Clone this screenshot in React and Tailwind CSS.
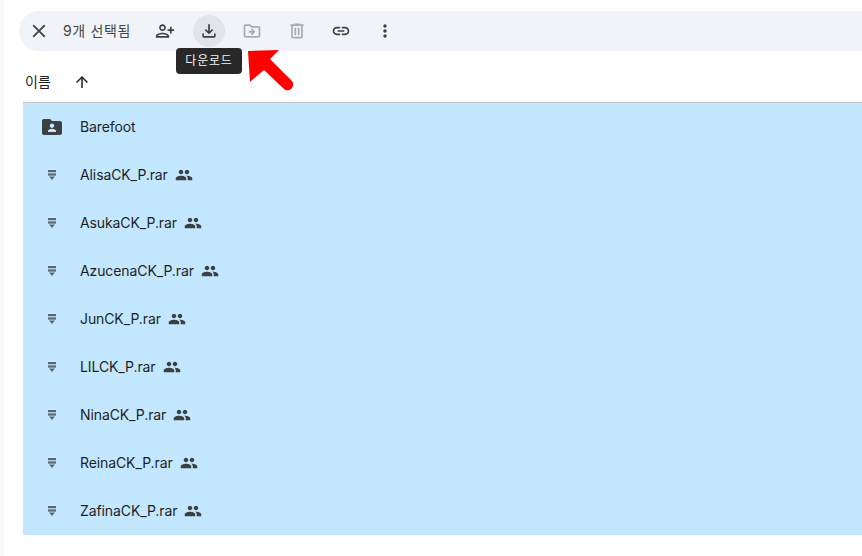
const P = {
  close: "M19 6.41L17.59 5 12 10.59 6.41 5 5 6.41 10.59 12 5 17.59 6.41 19 12 13.41 17.59 19 19 17.59 13.41 12z",
  add: "M15 12c2.21 0 4-1.79 4-4s-1.79-4-4-4-4 1.79-4 4 1.79 4 4 4zm0-6c1.1 0 2 .9 2 2s-.9 2-2 2-2-.9-2-2 .9-2 2-2zm0 8c-2.67 0-8 1.34-8 4v2h16v-2c0-2.66-5.33-4-8-4zm-6 4c.22-.72 3.31-2 6-2 2.7 0 5.8 1.29 6 2H9zm-3-3v-3h3v-2H6V7H4v3H1v2h3v3h2z",
  download: "M18 15v3H6v-3H4v3c0 1.1.9 2 2 2h12c1.1 0 2-.9 2-2v-3h-2zm-1-4l-1.41-1.41L13 12.17V4h-2v8.17L8.41 9.59 7 11l5 5 5-5z",
  move: "M20 6h-8l-2-2H4c-1.11 0-1.99.89-1.99 2L2 18c0 1.11.89 2 2 2h16c1.11 0 2-.89 2-2V8c0-1.11-.89-2-2-2zm0 12H4V6h5.17l2 2H20v10zm-8.01-9l-1.41 1.41L12.16 12H8v2h4.16l-1.59 1.59L11.99 17 16 13.01 11.99 9z",
  trash: "M15 4V3H9v1H4v2h1v13c0 1.1.9 2 2 2h10c1.1 0 2-.9 2-2V6h1V4h-5zm2 15H7V6h10v13zM9 8h2v9H9zm4 0h2v9h-2z",
  link: "M17 7h-4v2h4c1.65 0 3 1.35 3 3s-1.35 3-3 3h-4v2h4c2.76 0 5-2.24 5-5s-2.24-5-5-5zm-6 8H7c-1.65 0-3-1.35-3-3s1.35-3 3-3h4V7H7c-2.76 0-5 2.24-5 5s2.24 5 5 5h4v-2zm-3-4h8v2H8z",
  more: "M12 8c1.1 0 2-.9 2-2s-.9-2-2-2-2 .9-2 2 .9 2 2 2zm0 2c-1.1 0-2 .9-2 2s.9 2 2 2 2-.9 2-2-.9-2-2-2zm0 6c-1.1 0-2 .9-2 2s.9 2 2 2 2-.9 2-2-.9-2-2-2z",
  up: "M4 12l1.41 1.41L11 7.83V20h2V7.83l5.58 5.59L20 12l-8-8-8 8z",
  people: "M16 11c1.66 0 2.99-1.34 2.99-3S17.66 5 16 5c-1.66 0-3 1.34-3 3s1.34 3 3 3zm-8 0c1.66 0 2.99-1.34 2.99-3S9.66 5 8 5C6.34 5 5 6.34 5 8s1.34 3 3 3zm0 2c-2.33 0-7 1.17-7 3.5V19h14v-2.5c0-2.33-4.67-3.5-7-3.5zm8 0c-.29 0-.62.02-.97.05 1.16.84 1.97 1.97 1.97 3.45V19h6v-2.5c0-2.33-4.67-3.5-7-3.5z",
  folder: "M20 6h-8l-2-2H4c-1.1 0-1.99.9-1.99 2L2 18c0 1.1.9 2 2 2h16c1.1 0 2-.9 2-2V8c0-1.1-.9-2-2-2zm-8 2.5c1.2 0 2.2 1 2.2 2.2s-1 2.2-2.2 2.2-2.2-1-2.2-2.2 1-2.2 2.2-2.2zm4 8.5H8v-1.2c0-1.33 2.67-2 4-2s4 .67 4 2V17z",
};

function Icon({ d, size = 20, className = "", flip = false }) {
  return (
    <svg width={size} height={size} viewBox="0 0 24 24" fill="currentColor" className={className} style={flip ? { transform: "scaleX(-1)" } : undefined}>
      <path d={d} />
    </svg>
  );
}

function Tool({ d, disabled, active, flip, className = "" }) {
  return (
    <div className={`w-8 h-8 rounded-full flex items-center justify-center ${active ? "bg-[#e1e4e9]" : ""} ${disabled ? "text-[#a9acaf]" : "text-[#3c4043]"} ${className}`}>
      <Icon d={d} flip={flip} />
    </div>
  );
}

function ArchiveIcon() {
  return (
    <svg width="8" height="10" viewBox="0 0 8 10" fill="#5c6670">
      <rect x="0" y="0" width="8" height="2.2" />
      <rect x="0" y="3.4" width="8" height="2.2" />
      <path d="M1 6.6h6L4 10z" />
    </svg>
  );
}

function Row({ name, folder }) {
  return (
    <div className="h-12 flex items-center text-[#1f1f1f]">
      <div className={folder ? "w-[58px] flex justify-center" : "w-[57px] flex justify-center"}>
        {folder ? <Icon d={P.folder} size={24} className="text-[#3c4043]" /> : <ArchiveIcon />}
      </div>
      <span className={`text-sm tracking-[-0.1px] ${folder ? "-ml-px" : ""}`}>{name}</span>
      {!folder && <Icon d={P.people} size={18} className="ml-[7px] text-[#3c4043]" />}
    </div>
  );
}

const files = ["AlisaCK_P.rar", "AsukaCK_P.rar", "AzucenaCK_P.rar", "JunCK_P.rar", "LILCK_P.rar", "NinaCK_P.rar", "ReinaCK_P.rar", "ZafinaCK_P.rar"];

export default function App() {
  return (
    <div className="relative w-[862px] h-[556px] overflow-hidden bg-white flex font-['Inter','Noto_Sans_CJK_KR',sans-serif]">
      <div className="w-1 bg-[#fafafa] shrink-0" />
      <div className="flex-1 min-w-0 pt-[11px]">
        <div className="ml-[15px] h-10 bg-[#f0f4f9] rounded-l-full flex items-center pl-1 text-[#444746]">
          <div className="w-8 h-8 flex items-center justify-center"><Icon d={P.close} size={22} /></div>
          <span className="ml-2 w-[86px] text-sm tracking-[0.65px]">9개 선택됨</span>
          <div className="flex items-center gap-3">
            <Tool d={P.add} flip />
            <Tool d={P.download} active />
            <Tool d={P.move} disabled className="-translate-x-px" />
            <Tool d={P.trash} disabled />
            <Tool d={P.link} />
            <Tool d={P.more} />
          </div>
        </div>
        <div className="h-[51px] ml-[21px] pt-[11px] flex items-center text-[#1f1f1f]">
          <span className="text-sm w-[48px]">이름</span>
          <Icon d={P.up} size={18} />
        </div>
        <div className="ml-[19px] bg-[#c2e7ff] border-t border-[#c4c7c5]">
          <Row name="Barefoot" folder />
          {files.map((f) => <Row key={f} name={f} />)}
        </div>
      </div>
      <div className="absolute left-[176px] top-[48px] h-[26px] w-[66px] justify-center rounded bg-[#282828] text-[#f2f2f2] text-xs tracking-[0.8px] flex items-center">다운로드</div>
      <svg className="absolute left-[240px] top-[44px]" width="60" height="56" viewBox="0 0 60 56">
        <path d="M8 7L39 6 30 15 51 36a4.8 4.8 0 0 1-7 9L24 26l-14 12z" fill="#fe0000" />
      </svg>
    </div>
  );
}
